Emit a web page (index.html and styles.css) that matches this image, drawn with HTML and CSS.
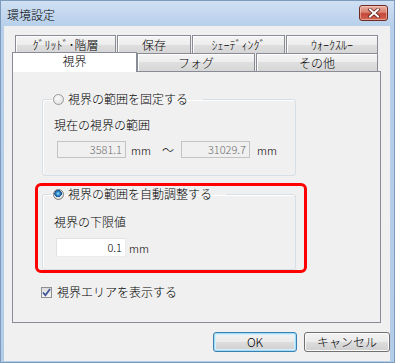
FILE: index.html
```html
<!DOCTYPE html>
<html lang="ja">
<head>
<meta charset="UTF-8">
<title>環境設定</title>
<link rel="stylesheet" href="styles.css">
</head>
<body>
    <div class="dialog">
        <div class="titlebar">
            <span class="title">環境設定</span>
            <span class="close">
                <svg width="14" height="10" viewBox="0 0 14 10">
                    <path d="M3 1.5 L11 8.5 M11 1.5 L3 8.5" stroke="#5a1c16" stroke-width="3.4" stroke-linecap="square"></path>
                    <path d="M3 1.5 L11 8.5 M11 1.5 L3 8.5" stroke="#ffffff" stroke-width="2" stroke-linecap="square"></path>
                </svg>
            </span>
        </div>

        <div class="client">
            <div class="tabs">
                <div class="tab-row tab-row--back">
                    <div class="tab tab--grid">ｸﾞﾘｯﾄﾞ･階層</div>
                    <div class="tab tab--save">保存</div>
                    <div class="tab tab--shade">ｼｪｰﾃﾞｨﾝｸﾞ</div>
                    <div class="tab tab--walk">ｳｫｰｸｽﾙｰ</div>
                </div>
                <div class="tab-row tab-row--front">
                    <div class="tab tab--active">視界</div>
                    <div class="tab tab--fog">フォグ</div>
                    <div class="tab tab--other">その他</div>
                </div>

                <div class="panel">
                    <!-- 範囲を固定 -->
                    <fieldset class="group group--fixed">
                        <legend><span class="radio"></span>視界の範囲を固定する</legend>
                        <div class="label">現在の視界の範囲</div>
                        <div class="field-row">
                            <span class="input input--disabled input--from">3581.1</span>
                            <span class="unit">mm</span>
                            <span class="tilde">〜</span>
                            <span class="input input--disabled">31029.7</span>
                            <span class="unit unit--wide">mm</span>
                        </div>
                    </fieldset>

                    <!-- 自動調整（赤枠） -->
                    <div class="highlight">
                        <fieldset class="group group--auto">
                            <legend><span class="radio radio--on"></span>視界の範囲を自動調整する</legend>
                            <div class="label">視界の下限値</div>
                            <div class="field-row">
                                <span class="input input--min">0.1</span>
                                <span class="unit unit--near">mm</span>
                            </div>
                        </fieldset>
                    </div>

                    <div class="check-row">
                        <span class="checkbox">
                            <svg width="9" height="9" viewBox="0 0 9 9">
                                <path d="M1 4.5 L3.4 7.2 L8 1" fill="none" stroke="#44579a" stroke-width="1.8"></path>
                            </svg>
                        </span>
                        視界エリアを表示する
                    </div>
                </div>
            </div>

            <div class="buttons">
                <span class="btn btn--default">OK</span>
                <span class="btn btn--cancel">キャンセル</span>
            </div>
        </div>
    </div>
</body>
</html>
```

FILE: styles.css
```css
body {
    margin: 0;
    font-family: "Noto Sans CJK JP", "Liberation Sans", sans-serif;
    font-size: 12px;
    font-weight: 300;
    line-height: 14px;
    color: #000;
}

.dialog,
.dialog * {
    box-sizing: border-box;
}

.dialog {
    display: flex;
    flex-direction: column;
    width: 395px;
    height: 363px;
    padding: 0 4px 1px 3px;
    border: 1px solid #7d9bbd;
    background: linear-gradient(#cfe0f3, #b7cfea 26px, #b3cce8);
}

/* タイトルバー */
.titlebar {
    display: flex;
    justify-content: space-between;
    height: 25px;
}

.title {
    margin: 7px 0 0 3px;
    font-size: 12px;
    line-height: 14px;
}

.close {
    display: flex;
    align-items: center;
    justify-content: center;
    width: 29px;
    height: 16px;
    margin: 4px 2px 0 0;
    border: 1px solid #6f2a24;
    border-radius: 3px;
    background: linear-gradient(#eab0a2, #d9826f 45%, #c4473a 55%, #d0654f);
    box-shadow: inset 0 0 0 1px rgba(255, 220, 210, 0.5);
}

/* クライアント領域 */
.client {
    flex: 1;
    padding: 9px 0 0 8px;
    background: #f0f0f0;
}

.tabs {
    width: 369px;
}

.tab-row {
    display: flex;
}

.tab-row--back {
    height: 18px;
    padding-left: 3px;
    gap: 1px;
}

.tab-row--front {
    position: relative;
    z-index: 1;
    align-items: flex-end;
    height: 20px;
    margin: -1px 0 -1px;
}

.tab {
    height: 100%;
    text-align: center;
    line-height: 17px;
    white-space: nowrap;
    border: 1px solid #898c95;
    border-bottom: none;
    background: linear-gradient(#f4f4f4, #ededed 50%, #dfdfdf 50%, #d6d6d6);
    box-shadow: inset 1px 1px 0 #fcfcfc;
}

.tab--grid { width: 101px; }
.tab--save { width: 74px; }
.tab--shade { width: 93px; }
.tab--walk { width: 92px; }

.tab--active {
    width: 125px;
    line-height: 16px;
    background: #fff;
    box-shadow: none;
}

.tab--fog,
.tab--other {
    height: 19px;
    border-bottom: 1px solid #898c95;
}

.tab--fog { width: 118px; }
.tab--other {
    width: 122px;
    margin-left: 1px;
}

.panel {
    display: flex;
    flex-direction: column;
    align-items: flex-start;
    height: 252px;
    padding: 20px 0 0 22px;
    border: 1px solid #898c95;
    background: #f0f0f0;
}

/* グループボックス */
.group {
    width: 254px;
    margin: 0;
    padding: 12px 11px 17px;
    border: 1px solid #d5dfe5;
    border-radius: 3px;
    box-shadow: inset 1px 1px 0 #fff;
}

.group legend {
    display: flex;
    align-items: center;
    margin-left: -2px;
    padding: 0 14px 0 1px;
    line-height: 14px;
}

.group--fixed {
    margin-left: 7px;
}

.group--auto {
    padding: 14px 11px 12px;
}

.label {
    line-height: 14px;
}

.field-row {
    display: flex;
    align-items: center;
    margin: 9px 0 0 3px;
}

.group--auto .field-row {
    margin-left: 2px;
}

.input {
    width: 69px;
    height: 17px;
    padding-right: 3px;
    text-align: right;
    line-height: 15px;
    font-size: 11px;
    border: 1px solid #c3c3c3;
    background: #f0f0f0;
    color: #6d6d6d;
}

.input--min {
    width: 70px;
    height: 19px;
    line-height: 17px;
    border-color: #e1e1e1 #ececec #ececec #e1e1e1;
    background: #fff;
    color: #000;
}

.unit {
    width: 24px;
    margin-left: 5px;
    font-size: 11px;
}

.unit--wide {
    margin-left: 7px;
}

.unit--near {
    margin-left: 3px;
}

.tilde {
    width: 26px;
    text-align: center;
}

/* ラジオ・チェック */
.radio {
    width: 11px;
    height: 11px;
    margin-right: 4px;
    border: 1px solid #9a9a9a;
    border-radius: 50%;
    background: radial-gradient(circle at 40% 35%, #fbfbfb, #d9d9d9);
}

.radio--on {
    border-color: #7c7c7c;
    background: radial-gradient(circle at 45% 40%, #9fe0ff 0, #2a86c8 2px, #174f8c 3.6px, #e8e8e8 3.8px, #cfcfcf);
}

.highlight {
    width: 272px;
    margin-top: 7px;
    padding: 1px 8px 0 4px;
    border: 3px solid #f00;
    border-radius: 6px;
}

.check-row {
    display: flex;
    align-items: center;
    margin: 12px 0 0 6px;
    line-height: 14px;
}

.checkbox {
    display: flex;
    align-items: center;
    justify-content: center;
    width: 11px;
    height: 11px;
    margin-right: 5px;
    border: 1px solid #8e8f8f;
    background: linear-gradient(#dcdcdc, #f6f6f6);
}

/* ボタン */
.buttons {
    display: flex;
    justify-content: flex-end;
    gap: 7px;
    width: 370px;
    margin: 9px 0 0 8px;
}

.btn {
    height: 20px;
    text-align: center;
    line-height: 18px;
    border: 1px solid #707070;
    border-radius: 3px;
    background: linear-gradient(#f2f2f2, #ebebeb 50%, #dddddd 50%, #cfcfcf);
    box-shadow: inset 0 0 0 1px #fbfbfb;
}

.btn--default {
    width: 84px;
    border-color: #3c7fb1;
    box-shadow: inset 0 0 0 1px #9fdcf6, inset 0 0 0 2px #d4effb;
}

.btn--cancel {
    width: 86px;
}
```
